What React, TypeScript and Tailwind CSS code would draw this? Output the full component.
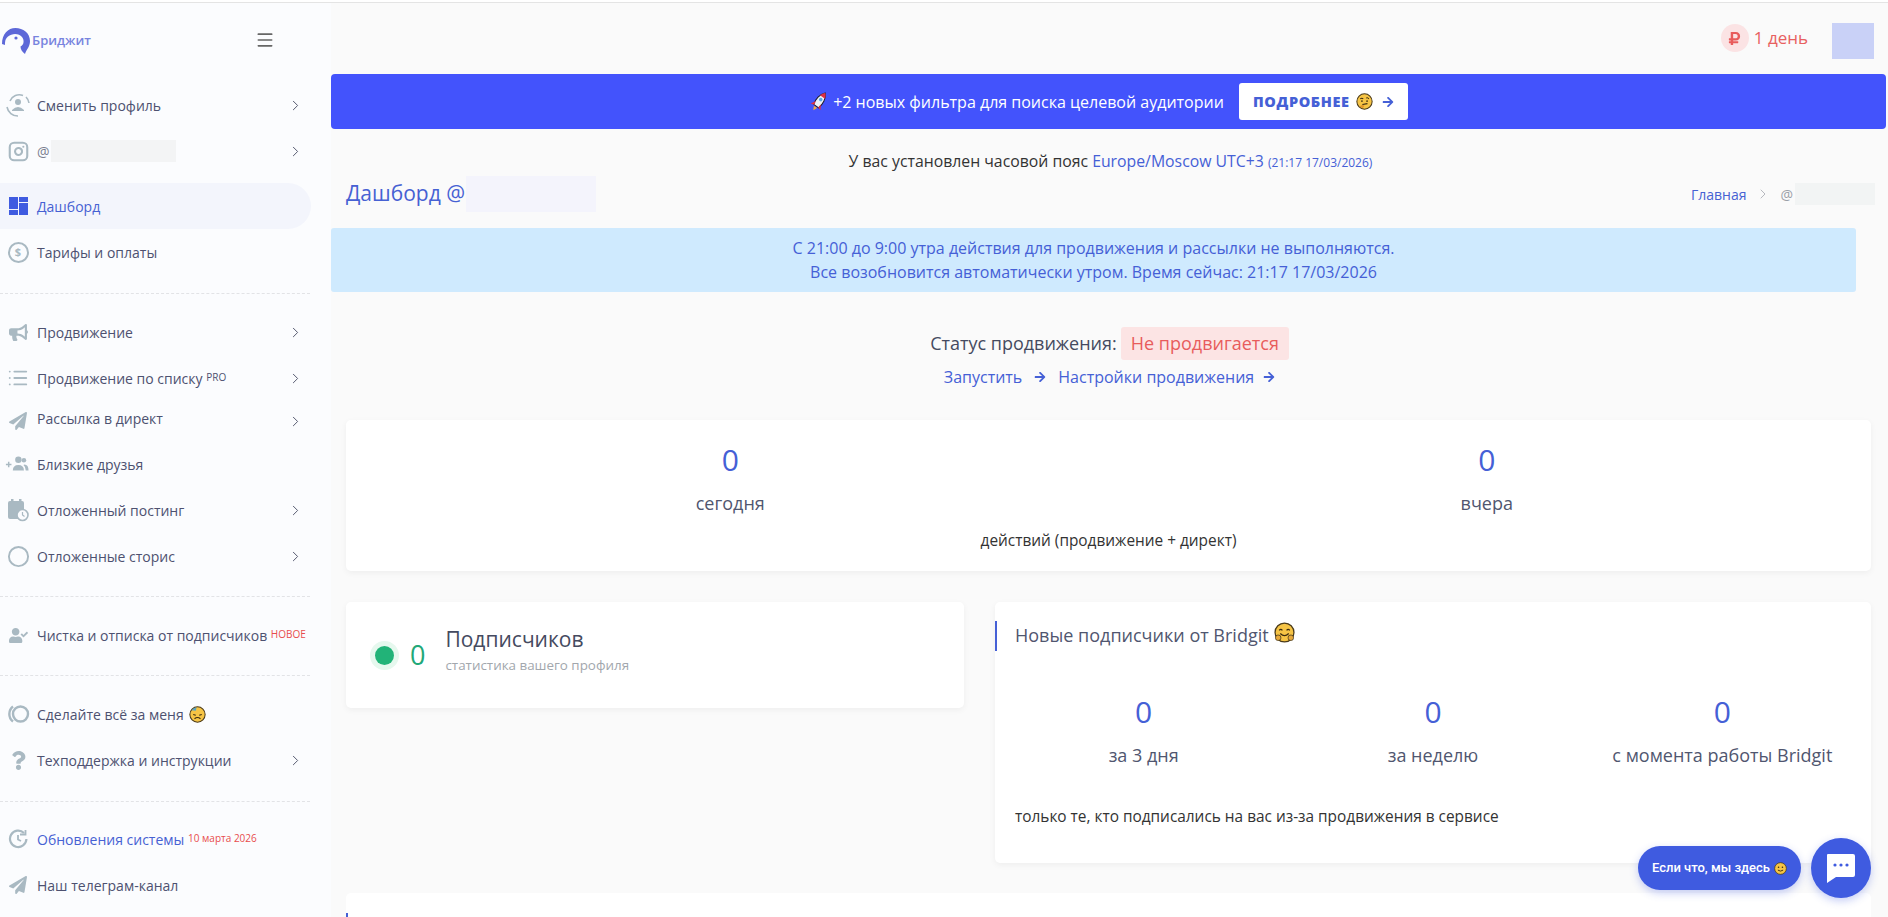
import type { ReactNode } from "react"
import { ChevronRight, Menu, Instagram, List, Circle } from "lucide-react"
import {
	FaBullhorn,
	FaPaperPlane,
	FaUserCheck,
	FaQuestion,
	FaArrowRight,
	FaRubleSign,
} from "react-icons/fa"

const iconColor = "#a9b9c2"

// Small hand drawn emoji, no emoji font in the sandbox
function Face({ size = 16, children }: { size?: number; children?: ReactNode }) {
	return (
		<svg width={size} height={size} viewBox="0 0 20 20" className="inline-block shrink-0">
			<circle cx="10" cy="10" r="9" fill="#f6c445" stroke="#4a3a1a" strokeWidth="1.2" />
			{children}
		</svg>
	)
}

function TiredFace() {
	return (
		<Face size={17}>
			<path d="M3 5 a8.5 8.5 0 0 1 6 -3.5 l-1 4z" fill="#3f9fd6" opacity="0.85" />
			<path d="M5 10 l3 1 M15 10 l-3 1" stroke="#3a2a10" strokeWidth="1.3" fill="none" />
			<path d="M6.5 15 q3.5 -3 7 0" stroke="#3a2a10" strokeWidth="1.3" fill="none" />
		</Face>
	)
}

function ThinkingFace() {
	return (
		<Face size={17}>
			<path d="M5 7 q2 -1.5 3.5 0 M12 6 q2 -1 3 1" stroke="#3a2a10" strokeWidth="1.2" fill="none" />
			<circle cx="7" cy="9.5" r="1" fill="#3a2a10" />
			<circle cx="13" cy="9.5" r="1" fill="#3a2a10" />
			<path d="M7.5 13.5 l6 -1" stroke="#3a2a10" strokeWidth="1.3" fill="none" />
			<path d="M4 16 q3 -3 6 -1 l-2 3z" fill="#e0962c" />
		</Face>
	)
}

function HugFace() {
	return (
		<Face size={21}>
			<path d="M5 8 q1.5 -2 3 0 M12 8 q1.5 -2 3 0" stroke="#3a2a10" strokeWidth="1.2" fill="none" />
			<path d="M6 11 q4 4 8 0" stroke="#3a2a10" strokeWidth="1.2" fill="none" />
			<rect x="1.5" y="12.5" width="5" height="5" rx="2" fill="#e8a93a" stroke="#4a3a1a" strokeWidth="0.8" />
			<rect x="13.5" y="12.5" width="5" height="5" rx="2" fill="#e8a93a" stroke="#4a3a1a" strokeWidth="0.8" />
		</Face>
	)
}

function SmileFace() {
	return (
		<Face size={13}>
			<circle cx="7" cy="8" r="1.2" fill="#3a2a10" />
			<circle cx="13" cy="8" r="1.2" fill="#3a2a10" />
			<path d="M6 12.5 q4 3 8 0" stroke="#3a2a10" strokeWidth="1.4" fill="none" />
		</Face>
	)
}

function Rocket() {
	return (
		<svg width="20" height="24" viewBox="0 0 20 24" className="shrink-0">
			<g transform="rotate(35 10 12)">
				<path d="M10 1 C14 5 14.5 12 13 17 H7 C5.5 12 6 5 10 1z" fill="#eef1f8" stroke="#1a1a2a" strokeWidth="1" />
				<path d="M10 1 C11.6 2.5 12.6 4.4 13 6 H7 C7.4 4.4 8.4 2.5 10 1z" fill="#dd2e44" />
				<circle cx="10" cy="9" r="1.8" fill="#5aa9e6" />
				<path d="M7 13 L4 18 L7.5 17z M13 13 L16 18 L12.5 17z" fill="#dd2e44" />
				<path d="M8 18 h4 l-2 4z" fill="#f4a742" />
			</g>
		</svg>
	)
}

function Logo() {
	return (
		<svg width="30" height="28" viewBox="0 0 30 28" className="shrink-0">
			<path
				d="M1 17 C1 7 7 1 14.5 1 C22 1 29 6 29 14 C29 20 25.5 22 24 27 C21 25 19.5 22 19.5 19.5 C23 18 23.5 13 21 10 C18 6 11 6 7 9.5 C4 12 4 15 4 18z"
				fill="#5d68d8"
			/>
			<circle cx="15" cy="11" r="1.6" fill="#5d68d8" />
		</svg>
	)
}

function ProfileSwitch() {
	return (
		<svg width="24" height="24" viewBox="0 0 24 24" fill="none" stroke={iconColor} strokeWidth="1.6">
			<path d="M4 8 A10 10 0 0 1 17 2.5" />
			<path d="M23 10 A10 10 0 0 0 20 4" />
			<path d="M1 14 A11 11 0 0 0 12 23" />
			<circle cx="12" cy="9" r="3" fill={iconColor} stroke="none" />
			<path d="M6 17 q6 -6 12 0 v1 H6z" fill={iconColor} stroke="none" />
		</svg>
	)
}

function DashboardIcon() {
	return (
		<div className="flex gap-[1px] w-[19px] h-[18px]">
			<div className="w-[9px] flex flex-col gap-[1px]">
				<div className="h-[12px] bg-[#3f5be0]" />
				<div className="h-[5px] bg-[#3f5be0]" />
			</div>
			<div className="w-[9px] flex flex-col gap-[1px]">
				<div className="h-[5px] bg-[#3f5be0]" />
				<div className="h-[12px] bg-[#3f5be0]" />
			</div>
		</div>
	)
}

function DollarIcon() {
	return (
		<div className="w-[21px] h-[21px] rounded-full border-[2.5px] border-[#a9b9c2] flex items-center justify-center text-[11px] font-bold text-[#a9b9c2]">
			$
		</div>
	)
}

function FriendsPlus() {
	return (
		<svg width="26" height="18" viewBox="0 0 26 18" className="relative left-[-1px]" fill={iconColor}>
			<path d="M1 9.5 h6 M4 6.5 v6" stroke={iconColor} strokeWidth="1.6" />
			<circle cx="14.5" cy="4.5" r="3.5" />
			<circle cx="20.5" cy="5" r="2.5" />
			<path d="M8.5 16 q0 -6 6 -6 q6 0 6 6z" />
			<path d="M21 9.5 q4.5 0 4.5 6.5 h-3 q0 -4 -2.5 -6z" />
		</svg>
	)
}

function CalendarClock() {
	return (
		<svg width="22" height="24" viewBox="0 0 22 24">
			<rect x="1" y="3" width="16" height="18" rx="2" fill={iconColor} />
			<rect x="4" y="1" width="2.5" height="4" fill={iconColor} />
			<rect x="12" y="1" width="2.5" height="4" fill={iconColor} />
			<circle cx="15.5" cy="17" r="5.5" fill="#fafbfe" stroke={iconColor} strokeWidth="1.6" />
			<path d="M15.5 14 v3 l2 1.5" stroke={iconColor} strokeWidth="1.2" fill="none" />
		</svg>
	)
}

function DoneForMe() {
	return (
		<svg width="24" height="20" viewBox="0 0 24 20" fill="none" stroke={iconColor} strokeWidth="2.4">
			<circle cx="14.5" cy="10" r="7.5" />
			<path d="M7 2.5 A9.5 9.5 0 0 0 7 17.5" />
		</svg>
	)
}

function UpdatesIcon() {
	return (
		<svg width="20" height="20" viewBox="0 0 20 20" fill="none" stroke={iconColor} strokeWidth="2.2">
			<path d="M16 4 A8.2 8.2 0 1 0 18.4 10" />
			<path d="M12 5.5 h5.5 v-4.5" strokeWidth="1.8" />
			<path d="M10 6 v4.5 l3 1.5" strokeWidth="1.8" />
		</svg>
	)
}

function IconBox({ children }: { children: ReactNode }) {
	return <div className="w-[24px] h-[24px] flex items-center justify-center shrink-0">{children}</div>
}

function NavRow({
	icon,
	label,
	arrow = false,
	height = "h-[46px]",
	labelClass = "text-[#4d5170]",
	active = false,
	labelShift = "",
}: {
	icon: ReactNode
	label: ReactNode
	arrow?: boolean
	height?: string
	labelClass?: string
	active?: boolean
	labelShift?: string
}) {
	return (
		<div
			className={`${height} w-[311px] flex items-center pl-[6px] pr-[6px] gap-[7px] rounded-r-full ${active ? "bg-[#f3f5fc]" : ""}`}
		>
			<IconBox>{icon}</IconBox>
			<span className={`text-[14px] whitespace-nowrap ${labelClass} ${labelShift}`}>{label}</span>
			{arrow && <ChevronRight size={17} strokeWidth={1.4} className="ml-auto mr-[1px] text-[#55596e]" />}
		</div>
	)
}

function Divider() {
	return <div className="w-[310px] border-t border-dashed border-[#e2e3e6]" />
}

function Sidebar() {
	return (
		<aside className="w-[331px] shrink-0 bg-[#fbfcfe] flex flex-col">
			<div className="h-[79px] flex items-start pt-[24px] pl-[1px] pr-[55px] justify-between">
				<div className="flex items-center gap-[1px]">
					<Logo />
					<span className="text-[13px] font-semibold text-[#7884de]">Бриджит</span>
				</div>
				<Menu size={20} strokeWidth={2} className="mt-[3px] text-[#666] relative left-[-1px]" />
			</div>
			<NavRow icon={<ProfileSwitch />} label="Сменить профиль" arrow />
			<NavRow
				icon={<Instagram size={21} strokeWidth={2.4} color={iconColor} />}
				label={
					<span className="flex items-center text-[#7a7e90]">
						@<span className="ml-[1px] w-[125px] h-[22px] bg-[#f3f4f5]" />
					</span>
				}
				arrow
			/>
			<div className="h-[9px]" />
			<NavRow icon={<DashboardIcon />} label="Дашборд" labelClass="text-[#4661d3]" active />
			<NavRow icon={<DollarIcon />} label="Тарифы и оплаты" />
			<div className="h-[18px]" />
			<Divider />
			<div className="h-[15px]" />
			<NavRow icon={<FaBullhorn size={19} color={iconColor} />} label="Продвижение" arrow />
			<NavRow
				icon={<List size={22} strokeWidth={2} color={iconColor} />}
				label={
					<>
						Продвижение по списку <sup className="text-[10px] relative top-[-3px]">PRO</sup>
					</>
				}
				arrow
			/>
			<NavRow
				icon={<FaPaperPlane size={18} color={iconColor} />}
				label="Рассылка в директ"
				arrow
				height="h-[40px]"
				labelShift="relative top-[-3px]"
			/>
			<NavRow icon={<FriendsPlus />} label="Близкие друзья" />
			<NavRow icon={<CalendarClock />} label="Отложенный постинг" arrow />
			<NavRow icon={<Circle size={23} strokeWidth={2} color={iconColor} />} label="Отложенные сторис" arrow />
			<div className="h-[17px]" />
			<Divider />
			<div className="h-[15px]" />
			<NavRow
				icon={<FaUserCheck size={19} color={iconColor} />}
				label={
					<>
						Чистка и отписка от подписчиков <sup className="text-[10px] text-[#e84c4c] relative top-[-3px]">НОВОЕ</sup>
					</>
				}
			/>
			<div className="h-[17px]" />
			<Divider />
			<div className="h-[15px]" />
			<NavRow
				icon={<DoneForMe />}
				label={
					<span className="flex items-center gap-[5px]">
						Сделайте всё за меня <TiredFace />
					</span>
				}
			/>
			<NavRow icon={<FaQuestion size={19} color={iconColor} />} label="Техподдержка и инструкции" arrow />
			<div className="h-[18px]" />
			<Divider />
			<div className="h-[14px]" />
			<NavRow
				icon={<UpdatesIcon />}
				labelClass="text-[#4661d3]"
				label={
					<>
						Обновления системы{" "}
						<sup className="text-[10px] text-[#e84c4c] relative top-[-3px]">10 марта 2026</sup>
					</>
				}
			/>
			<NavRow icon={<FaPaperPlane size={18} color={iconColor} />} label="Наш телеграм-канал" />
		</aside>
	)
}

function Stat({ value, label }: { value: string; label: string }) {
	return (
		<div className="flex flex-col items-center">
			<div className="text-[30px] leading-[40px] text-[#4560d6]">{value}</div>
			<div className="text-[18px] leading-[24px] mt-[11px] text-[#50566f]">{label}</div>
		</div>
	)
}

function BlueMark({ top }: { top: string }) {
	return <div className={`absolute left-0 ${top} w-[2px] h-[30px] bg-[#4560d6]`} />
}

function Banner() {
	return (
		<div className="h-[55px] mr-[2px] bg-[#4353fc] rounded-[4px] flex items-center justify-center gap-[15px]">
			<div className="flex items-center gap-[4px] text-[16px] text-white">
				<Rocket />
				<span>+2 новых фильтра для поиска целевой аудитории</span>
			</div>
			<div className="h-[37px] w-[169px] bg-white rounded-[3px] flex items-center justify-center gap-[6px] text-[14.5px] font-extrabold tracking-[0.6px] text-[#4560d6]">
				ПОДРОБНЕЕ <ThinkingFace />
				<FaArrowRight size={12} className="ml-[3px]" />
			</div>
		</div>
	)
}

function Content() {
	return (
		<main className="flex-1 min-w-0 bg-[#fafafa]">
			<header className="h-[71px] flex items-start justify-end pr-[14px] pt-[20px]">
				<div className="flex items-center mr-[24px] mt-[1px]">
					<div className="w-[28px] h-[28px] rounded-full bg-[#fbe3e4] flex items-center justify-center">
						<FaRubleSign size={15} color="#e85c5c" />
					</div>
					<span className="ml-[5px] text-[17px] text-[#e8605f]">1 день</span>
				</div>
				<div className="w-[42px] h-[36px] bg-[#c9d1f7]" />
			</header>

			<Banner />

			<div className="mt-[21px] h-[22px] text-center text-[15.8px] leading-[22px] text-[#333] ml-[2px]">
				У вас установлен часовой пояс <span className="text-[#4560d6]">Europe/Moscow UTC+3</span>{" "}
				<span className="text-[12px] text-[#4560d6]">(21:17 17/03/2026)</span>
			</div>

			<div className="h-[44px] flex items-center justify-between pl-[15px] pr-[13px]">
				<div className="flex items-center text-[21px] text-[#4661d3]">
					Дашборд @<span className="ml-[1px] w-[130px] h-[36px] bg-[#f4f4fc]" />
				</div>
				<div className="flex items-center text-[14px]">
					<span className="text-[#4661d3]">Главная</span>
					<ChevronRight size={16} strokeWidth={1.2} className="mx-[9px] text-[#a6a8b0]" />
					<span className="text-[#9aa0a8]">@</span>
					<span className="ml-[2px] w-[80px] h-[22px] bg-[#f2f4f4]" />
				</div>
			</div>

			<div className="mt-[12px] h-[64px] mr-[32px] bg-[#cfeafe] rounded-[3px] flex flex-col items-center justify-center text-[16px] leading-[24px] text-[#4560d6]">
				<div>С 21:00 до 9:00 утра действия для продвижения и рассылки не выполняются.</div>
				<div>Все возобновится автоматически утром. Время сейчас: 21:17 17/03/2026</div>
			</div>

			<div className="mt-[35px] flex items-center justify-center gap-[4px] text-[18px]">
				<span className="text-[#454a60]">Статус продвижения:</span>
				<span className="h-[33px] px-[10px] flex items-center rounded-[3px] bg-[#fce4e4] text-[#e85c5c]">
					Не продвигается
				</span>
			</div>
			<div className="mt-[5px] h-[24px] flex items-center justify-center text-[16px] text-[#4560d6]">
				Запустить
				<FaArrowRight size={12} className="mx-[12px]" />
				Настройки продвижения
				<FaArrowRight size={12} className="ml-[9px]" />
			</div>

			<div className="mt-[31px] ml-[15px] mr-[17px] h-[151px] bg-white rounded-[5px] shadow-[0_2px_6px_rgba(0,0,0,0.05)] pt-[20px]">
				<div className="grid grid-cols-2 px-[6px]">
					<Stat value="0" label="сегодня" />
					<Stat value="0" label="вчера" />
				</div>
				<div className="text-center text-[15.4px] leading-[20px] mt-[16px] text-[#333]">
					действий (продвижение + директ)
				</div>
			</div>

			<div className="mt-[31px] ml-[15px] mr-[17px] flex items-start gap-[31px]">
				<div className="w-[618px] h-[106px] bg-white rounded-[5px] shadow-[0_2px_6px_rgba(0,0,0,0.05)] flex items-center pl-[29px]">
					<div className="w-[19px] h-[19px] rounded-full bg-[#22b378] ring-[5px] ring-[#e6f8ee]" />
					<div className="ml-[16px] text-[27px] text-[#22a878]">0</div>
					<div className="ml-[20px] mb-[10px] flex flex-col">
						<div className="text-[21px] leading-[28px] text-[#454a60]">Подписчиков</div>
						<div className="text-[13.4px] leading-[20px] mt-[2px] text-[#a2a7ad]">статистика вашего профиля</div>
					</div>
				</div>
				<div className="relative flex-1 h-[261px] bg-white rounded-[5px] shadow-[0_2px_6px_rgba(0,0,0,0.05)] px-[4px]">
					<BlueMark top="top-[19px]" />
					<div className="pl-[16px] pt-[20px] h-[90px] flex items-start gap-[5px] text-[18px] leading-[26px] text-[#50566f]">
						Новые подписчики от Bridgit <HugFace />
					</div>
					<div className="grid grid-cols-3">
						<Stat value="0" label="за 3 дня" />
						<Stat value="0" label="за неделю" />
						<Stat value="0" label="с момента работы Bridgit" />
					</div>
					<div className="pl-[16px] mt-[39px] text-[15.4px] leading-[22px] text-[#333]">
						только те, кто подписались на вас из-за продвижения в сервисе
					</div>
				</div>
			</div>

			<div className="relative mt-[30px] ml-[15px] mr-[17px] h-[60px] bg-white rounded-[5px]">
				<BlueMark top="top-[20px]" />
			</div>
		</main>
	)
}

export default function App() {
	return (
		<div className="relative h-[917px] overflow-hidden font-['Open_Sans',sans-serif] bg-white">
			<div className="h-[3px] border-b border-[#e4e4e4]" />
			<div className="flex h-[914px] overflow-hidden">
				<Sidebar />
				<Content />
			</div>
			{/* Chat widget */}
			<div className="absolute left-[1638px] top-[846px] w-[163px] h-[44px] rounded-full bg-[#3f5be0] shadow-[0_3px_8px_rgba(63,91,224,0.3)] flex items-center justify-center gap-[4px] text-[13px] font-medium text-white font-['Roboto',sans-serif]">
				Если что, мы здесь <SmileFace />
			</div>
			<div className="absolute left-[1811px] top-[838px] w-[60px] h-[60px] rounded-full bg-[#3f5be0] shadow-[0_3px_8px_rgba(63,91,224,0.3)] flex items-center justify-center">
				<svg width="32" height="32" viewBox="0 0 32 32">
					<path d="M3 2 H28 a2 2 0 0 1 2 2 V23 a2 2 0 0 1 -2 2 H11 L2 31 V3 a1 1 0 0 1 1 -1z" fill="white" />
					<circle cx="10" cy="13" r="1.6" fill="#3f5be0" />
					<circle cx="16" cy="13" r="1.6" fill="#3f5be0" />
					<circle cx="22" cy="13" r="1.6" fill="#3f5be0" />
				</svg>
			</div>
		</div>
	)
}
